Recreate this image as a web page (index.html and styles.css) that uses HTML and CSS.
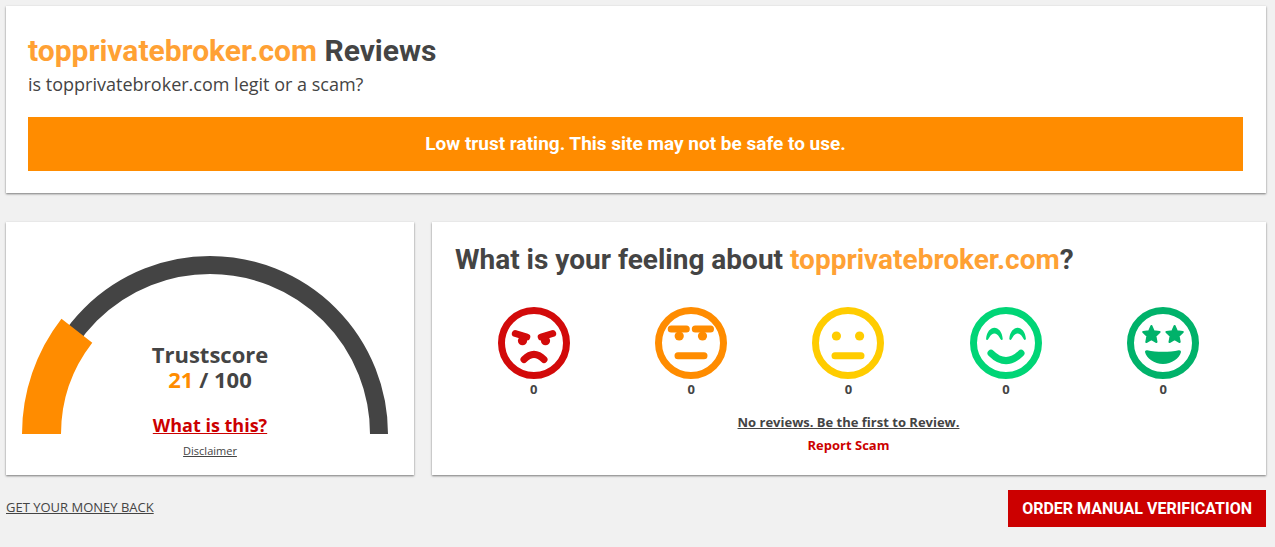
FILE: index.html
```html
<!DOCTYPE html>
<html lang="en">
<head>
<meta charset="utf-8">
<title>topprivatebroker.com Reviews</title>
<link rel="stylesheet" href="styles.css">
</head>
<body>
<main class="page">
  <header class="card intro">
    <h1 class="title"><span class="site">topprivatebroker.com</span> Reviews</h1>
    <p class="subtitle">is topprivatebroker.com legit or a scam?</p>
    <p class="banner">Low trust rating. This site may not be safe to use.</p>
  </header>

  <div class="columns">
    <section class="card score">
      <svg class="gauge" viewBox="0 0 376 188" aria-hidden="true">
        <path d="M19 188A169 169 0 0 1 357 188" fill="none" stroke="#444" stroke-width="18"/>
        <path d="M19.5 188A168.500 168.500 0 0 1 54.860 84.720" fill="none" stroke="#ff8c00" stroke-width="39"/>
      </svg>
      <div class="score-text">
        <h2 class="score-value">Trustscore<br><span class="score-number">21</span> / 100</h2>
        <a class="what" href="#">What is this?</a>
        <a class="disclaimer" href="#">Disclaimer</a>
      </div>
    </section>

    <section class="card feeling">
      <h2 class="title question">What is your feeling about <span class="site">topprivatebroker.com</span>?</h2>
      <div class="faces">
        <button class="face angry" type="button" aria-label="Very bad, 0 votes">
          <svg viewBox="0 0 72 72" aria-hidden="true">
            <circle class="line" cx="36" cy="36" r="32.500"/>
            <path class="line" d="M17.300 26.500L28.800 30M54.700 26.500L43.200 30M26 52.500Q36 42.500 46 52.500"/>
            <circle cx="24.500" cy="33.700" r="4.600"/><circle cx="47.500" cy="33.700" r="4.600"/>
          </svg>
          <span>0</span>
        </button>
        <button class="face bad" type="button" aria-label="Bad, 0 votes">
          <svg viewBox="0 0 72 72" aria-hidden="true">
            <circle class="line" cx="36" cy="36" r="32.500"/>
            <path class="line" d="M16.200 22H31.300M40.300 22H55.500M23 48.700H49"/>
            <circle cx="24.200" cy="29" r="4.600"/><circle cx="47.500" cy="29" r="4.600"/>
          </svg>
          <span>0</span>
        </button>
        <button class="face neutral" type="button" aria-label="Neutral, 0 votes">
          <svg viewBox="0 0 72 72" aria-hidden="true">
            <circle class="line" cx="36" cy="36" r="32.500"/>
            <path class="line" d="M23 48.700H49"/>
            <circle cx="24.400" cy="29" r="4.600"/><circle cx="47.600" cy="29" r="4.600"/>
          </svg>
          <span>0</span>
        </button>
        <button class="face good" type="button" aria-label="Good, 0 votes">
          <svg viewBox="0 0 72 72" aria-hidden="true">
            <circle class="line" cx="36" cy="36" r="32.500"/>
            <path class="line" d="M21 46.200Q36 61 51 46.200"/>
            <path d="M16.100 31.700C16.700 24.800 20.500 20.800 24.400 20.800S32.200 24.800 32.700 31.700C32.800 33 31.200 33.400 30.600 32.300L29.200 29.900C28 27.800 26.200 26.500 24.400 26.500S20.800 27.800 19.600 29.900L18.200 32.300C17.600 33.400 16 32.900 16.100 31.700Z"/>
            <path d="M39.300 31.700C39.900 24.800 43.700 20.800 47.600 20.800S55.400 24.800 55.900 31.700C56 33 54.400 33.400 53.800 32.300L52.400 29.900C51.200 27.800 49.400 26.500 47.600 26.500S44 27.800 42.800 29.900L41.400 32.300C40.800 33.400 39.200 32.900 39.300 31.700Z"/>
          </svg>
          <span>0</span>
        </button>
        <button class="face great" type="button" aria-label="Very good, 0 votes">
          <svg viewBox="0 0 72 72" aria-hidden="true">
            <circle class="line" cx="36" cy="36" r="32.500"/>
            <path class="star" d="M24.400 19L26.800 24.300L32.600 25L28.400 29L29.500 35L24.400 32.200L19.300 35L20.400 29L16.200 25L22 24.300Z"/>
            <path class="star" d="M47.600 19L50 24.300L55.800 25L51.600 29L52.700 35L47.600 32.200L42.500 35L43.600 29L39.400 25L45.200 24.300Z"/>
            <path d="M36 57C27.300 57 19.300 51.500 18 45.100C17.800 43.800 19 42.900 20.200 43.200C29.800 45.300 42.200 45.300 51.800 43.200C53 42.900 54.200 43.800 54 45.100C52.700 51.500 44.700 57 36 57Z"/>
          </svg>
          <span>0</span>
        </button>
      </div>
      <div class="actions">
        <a class="first-review" href="#">No reviews. Be the first to Review.</a>
        <a class="report" href="#">Report Scam</a>
      </div>
    </section>
  </div>

  <footer class="bottom">
    <a class="money" href="#">GET YOUR MONEY BACK</a>
    <button class="order" type="button">ORDER MANUAL VERIFICATION</button>
  </footer>
</main>
</body>
</html>
```
FILE: styles.css
```css
* {
  box-sizing: border-box;
}

body {
  margin: 0;
  background: #f1f1f1;
  color: #444;
  font-family: "Open Sans", sans-serif;
}

a {
  color: inherit;
}

button {
  border: 0;
  font: inherit;
  cursor: pointer;
}

.page {
  padding: 6px 9px 20px 6px;
}

.card {
  background: #fff;
  box-shadow: 0 1px 2px rgba(0, 0, 0, 0.5);
}

.intro {
  padding: 26px 23px 22px 22px;
}

.title {
  margin: 0;
  font: 700 30px/38px Roboto, sans-serif;
}

.question {
  font-size: 28px;
}

.site {
  color: #ffa134;
}

.subtitle {
  margin: 0 0 18px;
  font-size: 18px;
  line-height: 29px;
}

.banner {
  margin: 0;
  background: #ff8c00;
  color: #fff;
  font: 700 19px/54px Roboto, sans-serif;
  text-align: center;
}

.columns {
  display: grid;
  grid-template-columns: 408fr 834fr;
  gap: 18px;
  margin-top: 29px;
}

.score {
  display: grid;
  padding: 24px 16px 11px;
}

.gauge {
  grid-area: 1 / 1;
  align-self: start;
  width: 100%;
}

.score-text {
  grid-area: 1 / 1;
  display: flex;
  flex-direction: column;
  align-items: center;
  justify-content: flex-end;
}

.score-value {
  margin: 0 0 20px;
  font-size: 22px;
  line-height: 25px;
  text-align: center;
}

.score-number {
  color: #ff8c00;
}

.what {
  color: #c00;
  font-size: 18px;
  font-weight: 700;
  line-height: 26px;
}

.disclaimer {
  font-size: 11px;
  line-height: 26px;
}

.feeling {
  padding: 19px 24px 18px 23px;
}

.faces {
  display: grid;
  grid-template-columns: repeat(5, 1fr);
  margin-top: 28px;
}

.face {
  display: flex;
  flex-direction: column;
  align-items: center;
  padding: 0;
  background: none;
}

.face svg {
  width: 72px;
  height: 72px;
  fill: currentColor;
}

.face span {
  color: #444;
  font-size: 13px;
  font-weight: 700;
  line-height: 21px;
}

.face .line {
  fill: none;
  stroke: currentColor;
  stroke-width: 7;
  stroke-linecap: round;
}

.star {
  stroke: currentColor;
  stroke-width: 2;
  stroke-linejoin: round;
}

.angry {
  color: #d20a0a;
}

.bad {
  color: #ff8c00;
}

.neutral {
  color: #fc0;
}

.good {
  color: #00d576;
}

.great {
  color: #00b26a;
}

.actions {
  display: flex;
  flex-direction: column;
  align-items: center;
  margin-top: 11px;
  font-size: 13px;
  font-weight: 700;
  line-height: 23px;
}

.report {
  color: #c00;
  text-decoration: none;
}

.bottom {
  display: flex;
  align-items: flex-start;
  justify-content: space-between;
  margin-top: 15px;
}

.money {
  font-size: 13px;
  line-height: 34px;
}

.order {
  padding: 0 14px;
  background: #c00;
  color: #fff;
  font: 700 16px/37px Roboto, sans-serif;
}
```
